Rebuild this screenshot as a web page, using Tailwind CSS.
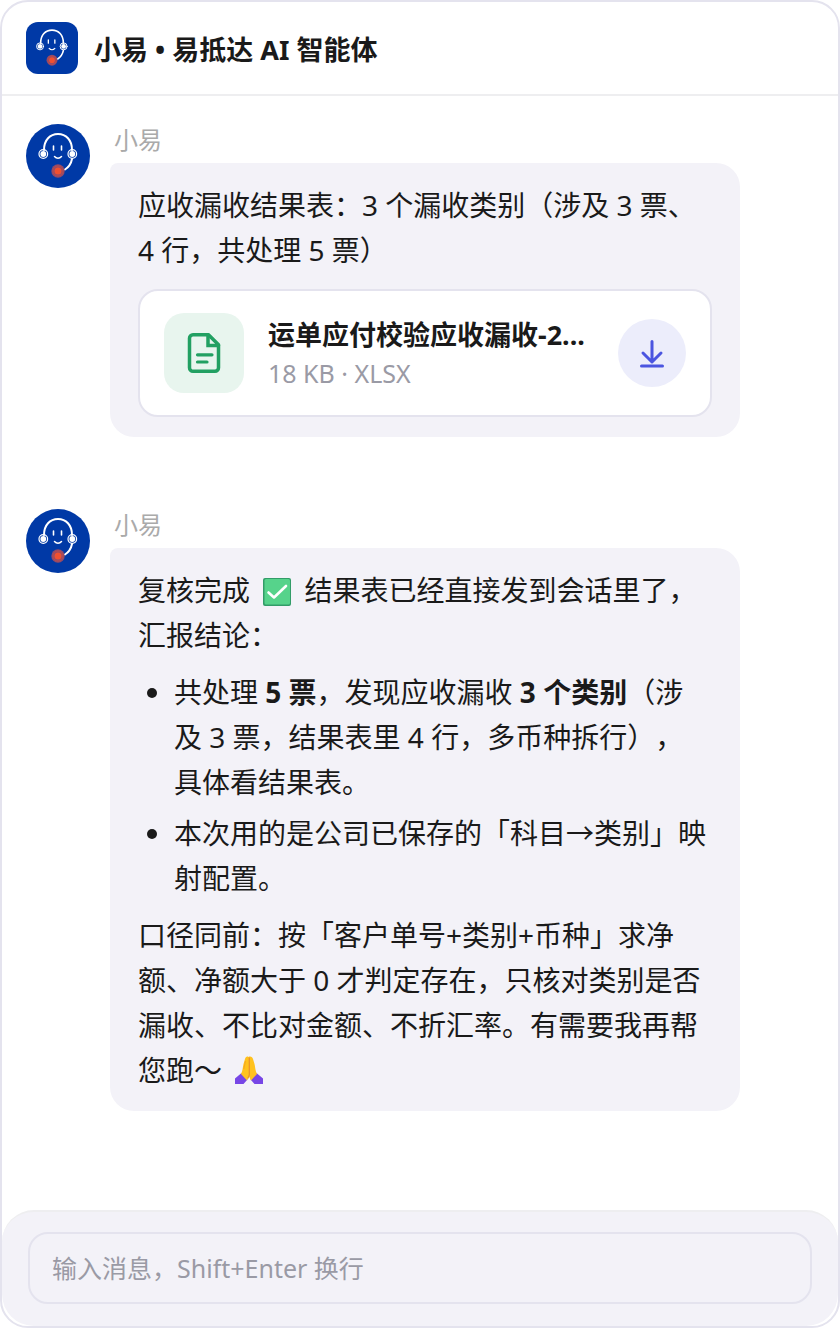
<!DOCTYPE html>
<html lang="zh-CN">

<head>
    <meta charset="UTF-8" />
    <meta
        name="viewport"
        content="width=device-width, initial-scale=1.0"
    />
    <script src="https://cdn.jsdelivr.net/npm/@tailwindcss/browser@4"></script>
    <title>小易 • 易抵达 AI 智能体</title>
</head>

<body class="bg-white text-[#1a1a1a] font-['Noto_Sans','Noto_Sans_CJK_SC',sans-serif] [text-spacing-trim:space-all]">

    <svg class="hidden">
        <symbol id="agent" viewBox="0 0 64 64">
            <rect width="64" height="64" fill="#0039a6" />
            <g fill="none" stroke="#fff" stroke-linecap="round">
                <path d="M18 26C18 16 24 10 32 10s14 6 14 16" stroke-width="2" />
                <path d="M46 35c-1 5-3 8-7 10.500" stroke-width="2" />
                <path d="M27.500 22v4M35.500 22v4" stroke-width="1.600" />
                <path d="M28.500 32.500c2 2.200 5 2.200 7 0" stroke-width="1.500" />
                <circle cx="17.300" cy="30" r="4.300" stroke-width="1.200" />
                <circle cx="46.300" cy="30" r="4.300" stroke-width="1.200" />
            </g>
            <circle cx="17.300" cy="30" r="2.900" fill="#fff" />
            <circle cx="46.300" cy="30" r="2.900" fill="#fff" />
            <circle cx="32" cy="47" r="6.700" fill="#934a68" />
            <circle cx="32" cy="47" r="5" fill="none" stroke="#c24c47" stroke-width=".8" />
            <circle cx="32" cy="47" r="3.500" fill="#f05030" />
        </symbol>
    </svg>

    <div class="min-h-screen flex flex-col border-2 border-[#e4e3ee] rounded-[28px]">

        <header class="flex items-center gap-4 px-6 py-5 border-b-2 border-[#eeeef0]">
            <svg class="size-13 rounded-xl" aria-hidden="true"><use href="#agent" /></svg>
            <h1 class="pt-1 text-[27px] leading-9 font-bold">小易 • 易抵达 AI 智能体</h1>
        </header>

        <main class="grow flex flex-col gap-18 px-6 pt-7 pb-8">

            <article class="flex gap-5">
                <svg class="size-16 shrink-0 rounded-full" aria-hidden="true"><use href="#agent" /></svg>
                <div class="w-4/5">
                    <p class="pl-1 pb-2 text-2xl leading-[31px] text-[#aaa]">小易</p>
                    <div class="bg-[#f3f2f8] rounded-3xl rounded-tl-lg px-7 py-5 text-[28px] leading-[45px]">
                        <p>应收漏收结果表：3 个漏收类别（涉及 3 票、<br />4 行，共处理 5 票）</p>
                        <div class="mt-4 flex items-center gap-6 bg-white border-2 border-[#e4e3ee] rounded-[20px] px-6 py-[22px]">
                            <div class="size-20 shrink-0 rounded-[20px] bg-[#e8f5ee] text-[#22a062] flex items-center justify-center">
                                <svg
                                    fill="none"
                                    viewBox="0 0 40 44"
                                    stroke-width="3.500"
                                    stroke="currentColor"
                                    stroke-linecap="round"
                                    stroke-linejoin="round"
                                    class="w-10 h-11"
                                >
                                    <path d="M24.500 3.700H9a3.500 3.500 0 0 0-3.500 3.500v29.600A3.500 3.500 0 0 0 9 40.300h22a3.500 3.500 0 0 0 3.500-3.500V13.700z" />
                                    <path d="M24 4v10.500h10.500" stroke-linejoin="miter" />
                                    <path d="M13.500 23.800h14.500M13.500 31h9.500" stroke-width="3.200" />
                                </svg>
                            </div>
                            <div class="grow min-w-0">
                                <p class="truncate text-[27px] leading-10 font-bold">运单应付校验应收漏收-2...</p>
                                <p class="text-[25px] leading-9 text-[#9a9aa5]">18 KB · XLSX</p>
                            </div>
                            <button class="size-17 shrink-0 rounded-full bg-[#ecedfb] text-[#4b55e0] flex items-center justify-center" aria-label="下载">
                                <svg
                                    fill="none"
                                    viewBox="0 0 32 32"
                                    stroke-width="3"
                                    stroke="currentColor"
                                    stroke-linecap="round"
                                    stroke-linejoin="round"
                                    class="size-8"
                                >
                                    <path d="M16 4.500V25M7 16 16 25l9-9M5.500 29h21" />
                                </svg>
                            </button>
                        </div>
                    </div>
                </div>
            </article>

            <article class="flex gap-5">
                <svg class="size-16 shrink-0 rounded-full" aria-hidden="true"><use href="#agent" /></svg>
                <div class="w-4/5">
                    <p class="pl-1 pb-2 text-2xl leading-[31px] text-[#aaa]">小易</p>
                    <div class="flex flex-col gap-3 bg-[#f3f2f8] rounded-3xl rounded-tl-lg px-7 pt-5 pb-[18px] text-[28px] leading-[45px]">
                        <p>
                            复核完成
                            <svg viewBox="0 0 28 28" class="inline size-7 mx-[6px] -mt-1" role="img" aria-label="完成">
                                <rect width="28" height="28" rx="2" fill="#329c68" />
                                <rect x="1.500" y="1" width="25.500" height="25.500" rx="1.500" fill="#56d38b" />
                                <path d="m5.500 14.500 5.500 5 12-11.500" fill="none" stroke="#fff" stroke-width="2.600" stroke-linecap="round" stroke-linejoin="round" />
                            </svg>
                            结果表已经直接发到会话里了，<br />汇报结论：
                        </p>
                        <ul class="list-disc pl-9 flex flex-col gap-[6px]">
                            <li>共处理 <strong>5 票</strong>，发现应收漏收 <strong>3 个类别</strong>（涉<br />及 3 票，结果表里 4 行，多币种拆行），<br />具体看结果表。</li>
                            <li>本次用的是公司已保存的「科目→类别」映射配置。</li>
                        </ul>
                        <p>
                            口径同前：按「客户单号+类别+币种」求净<br />额、净额大于 0 才判定存在，只核对类别是否<br />漏收、不比对金额、不折汇率。有需要我再帮<br />您跑～
                            <svg viewBox="0 0 28 28" class="inline size-7 ml-[6px] -mt-2" role="img" aria-label="感谢">
                                <path d="M0 22.500 6.500 17l6 6.500-4 4.500H0zM28 22.500 21.500 17l-6 6.500 4 4.500H28z" fill="#7746e6" />
                                <path d="M13.500 1c-1.500-1-3 0-3.500 2L8.500 8c-.8 3-.7 7-2.500 10l6 6.500 2-4 2 4 6-6.500c-1.800-3-1.700-7-2.500-10L18 3c-.5-2-2.500-3-4.500-2z" fill="#ffc21f" />
                                <path d="M14.300 1.500V19l-1.500 3.500" fill="none" stroke="#e8912d" stroke-width="1.200" />
                                <path d="m10.500 5-1.700 8" fill="none" stroke="#f5a623" />
                            </svg>
                        </p>
                    </div>
                </div>
            </article>

        </main>

        <footer class="bg-[#f3f2f8] border-t-2 border-[#eeeef0] rounded-[32px] px-[26px] pt-5 pb-[22px]">
            <input
                type="text"
                aria-label="输入消息"
                placeholder="输入消息，Shift+Enter 换行"
                class="block w-full h-18 px-[22px] border-2 border-[#e4e3ee] rounded-[20px] text-[25px] placeholder:text-[#9a9aa5]"
            />
        </footer>

    </div>

</body>

</html>
